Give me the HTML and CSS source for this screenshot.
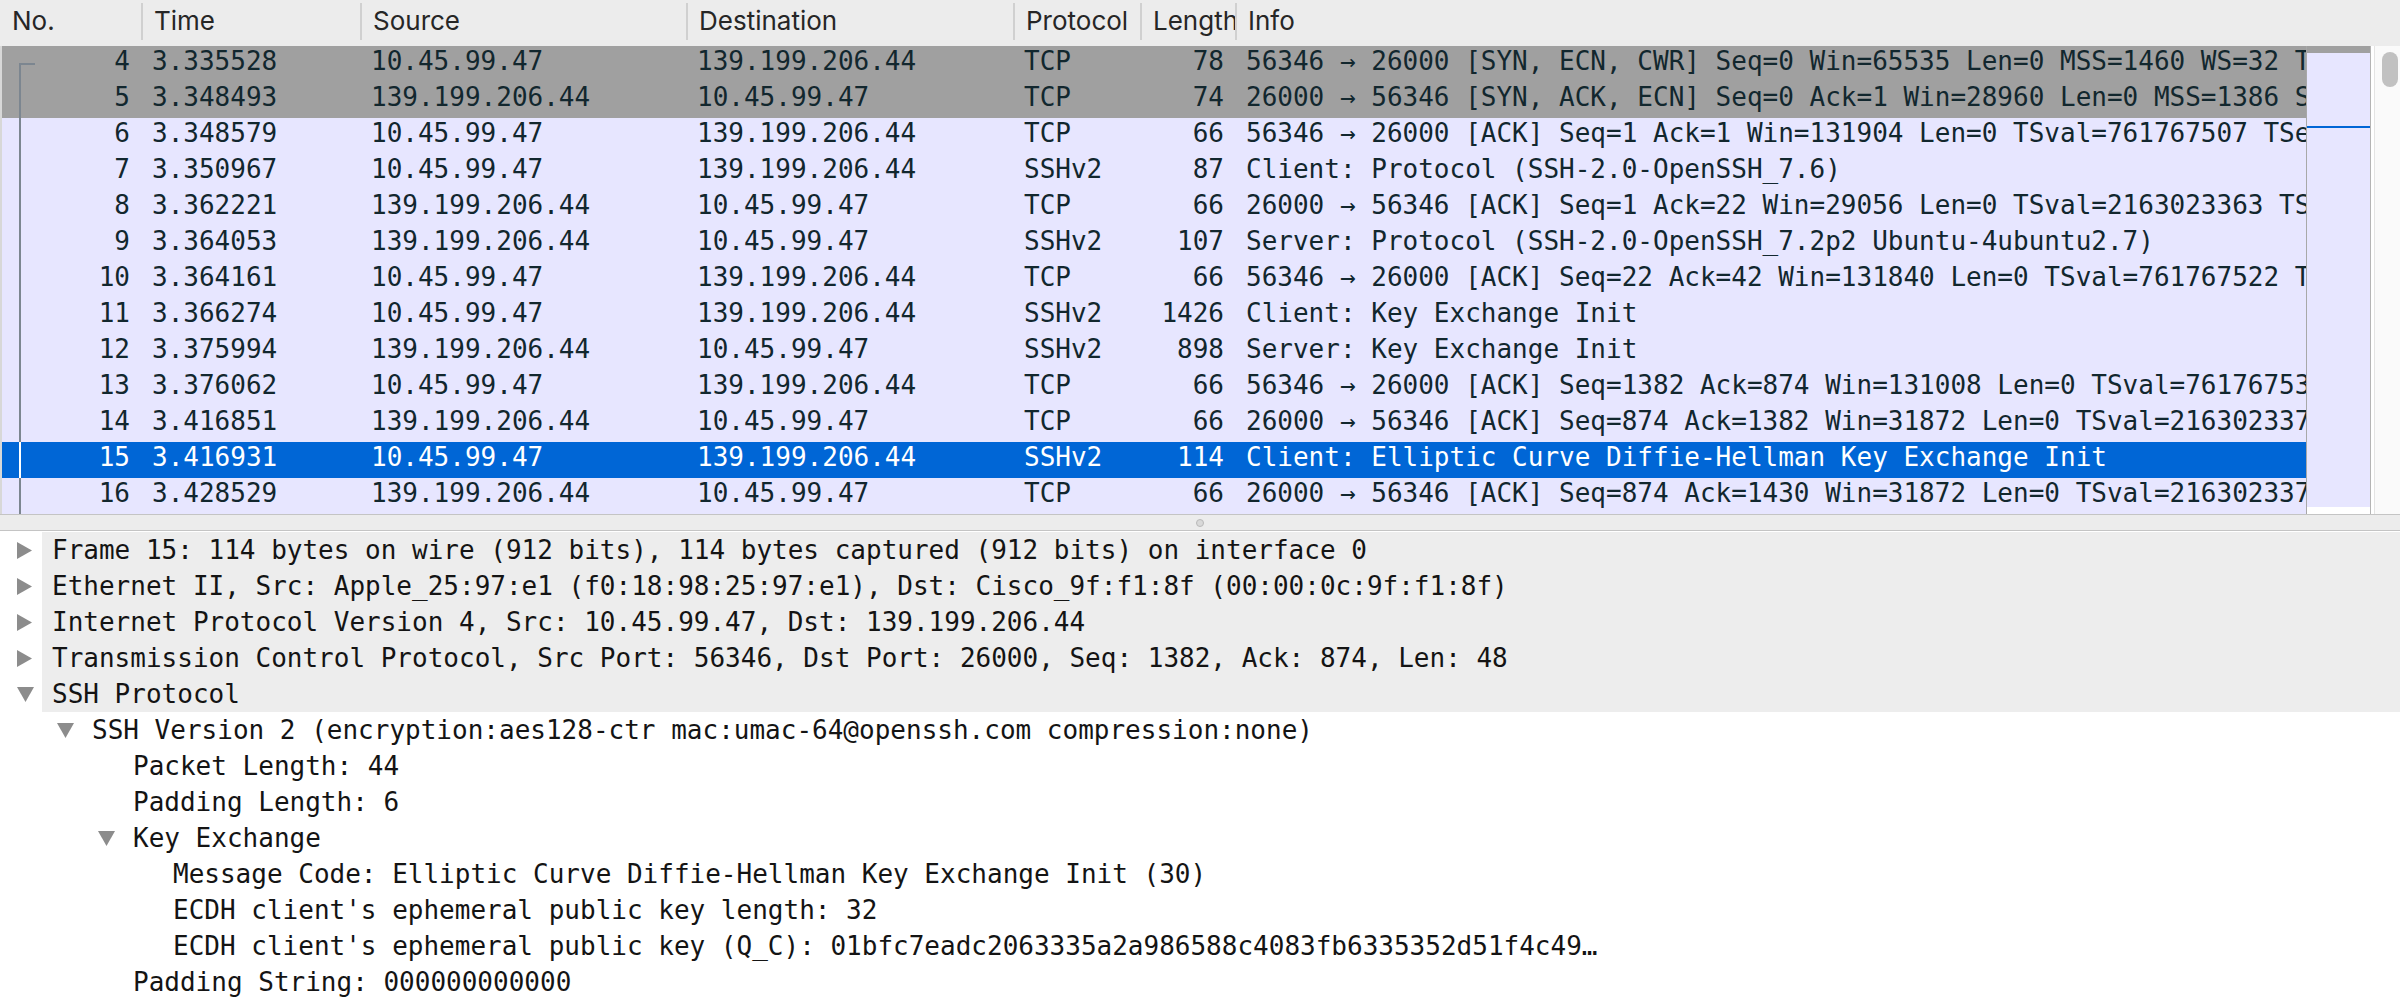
FILE: index.html
```html
<!DOCTYPE html>
<html>
<head>
<meta charset="utf-8">
<link rel="stylesheet" href="styles.css">
</head>
<body>
<div class="app">
  <section class="plist">
    <div class="phead">
      <div class="hc first">No.</div>
      <div class="hc">Time</div>
      <div class="hc">Source</div>
      <div class="hc">Destination</div>
      <div class="hc">Protocol</div>
      <div class="hc">Length</div>
      <div class="hc">Info</div>
    </div>
    <div class="pbody">
      <div class="rows">
        <div class="row syn"><span class="c no"><i class="rel start"></i>4</span><span class="c">3.335528</span><span class="c">10.45.99.47</span><span class="c">139.199.206.44</span><span class="c">TCP</span><span class="c num">78</span><span class="c info">56346 → 26000 [SYN, ECN, CWR] Seq=0 Win=65535 Len=0 MSS=1460 WS=32 TSval=761767491 TSecr=0 SACK_PERM=1</span></div>
        <div class="row syn"><span class="c no"><i class="rel"></i>5</span><span class="c">3.348493</span><span class="c">139.199.206.44</span><span class="c">10.45.99.47</span><span class="c">TCP</span><span class="c num">74</span><span class="c info">26000 → 56346 [SYN, ACK, ECN] Seq=0 Ack=1 Win=28960 Len=0 MSS=1386 SACK_PERM=1 TSval=2163023347</span></div>
        <div class="row"><span class="c no"><i class="rel"></i>6</span><span class="c">3.348579</span><span class="c">10.45.99.47</span><span class="c">139.199.206.44</span><span class="c">TCP</span><span class="c num">66</span><span class="c info">56346 → 26000 [ACK] Seq=1 Ack=1 Win=131904 Len=0 TSval=761767507 TSecr=2163023347</span></div>
        <div class="row"><span class="c no"><i class="rel"></i>7</span><span class="c">3.350967</span><span class="c">10.45.99.47</span><span class="c">139.199.206.44</span><span class="c">SSHv2</span><span class="c num">87</span><span class="c info">Client: Protocol (SSH-2.0-OpenSSH_7.6)</span></div>
        <div class="row"><span class="c no"><i class="rel"></i>8</span><span class="c">3.362221</span><span class="c">139.199.206.44</span><span class="c">10.45.99.47</span><span class="c">TCP</span><span class="c num">66</span><span class="c info">26000 → 56346 [ACK] Seq=1 Ack=22 Win=29056 Len=0 TSval=2163023363 TSecr=761767507</span></div>
        <div class="row"><span class="c no"><i class="rel"></i>9</span><span class="c">3.364053</span><span class="c">139.199.206.44</span><span class="c">10.45.99.47</span><span class="c">SSHv2</span><span class="c num">107</span><span class="c info">Server: Protocol (SSH-2.0-OpenSSH_7.2p2 Ubuntu-4ubuntu2.7)</span></div>
        <div class="row"><span class="c no"><i class="rel"></i>10</span><span class="c">3.364161</span><span class="c">10.45.99.47</span><span class="c">139.199.206.44</span><span class="c">TCP</span><span class="c num">66</span><span class="c info">56346 → 26000 [ACK] Seq=22 Ack=42 Win=131840 Len=0 TSval=761767522 TSecr=2163023364</span></div>
        <div class="row"><span class="c no"><i class="rel"></i>11</span><span class="c">3.366274</span><span class="c">10.45.99.47</span><span class="c">139.199.206.44</span><span class="c">SSHv2</span><span class="c num">1426</span><span class="c info">Client: Key Exchange Init</span></div>
        <div class="row"><span class="c no"><i class="rel"></i>12</span><span class="c">3.375994</span><span class="c">139.199.206.44</span><span class="c">10.45.99.47</span><span class="c">SSHv2</span><span class="c num">898</span><span class="c info">Server: Key Exchange Init</span></div>
        <div class="row"><span class="c no"><i class="rel"></i>13</span><span class="c">3.376062</span><span class="c">10.45.99.47</span><span class="c">139.199.206.44</span><span class="c">TCP</span><span class="c num">66</span><span class="c info">56346 → 26000 [ACK] Seq=1382 Ack=874 Win=131008 Len=0 TSval=761767531 TSecr=2163023373</span></div>
        <div class="row"><span class="c no"><i class="rel"></i>14</span><span class="c">3.416851</span><span class="c">139.199.206.44</span><span class="c">10.45.99.47</span><span class="c">TCP</span><span class="c num">66</span><span class="c info">26000 → 56346 [ACK] Seq=874 Ack=1382 Win=31872 Len=0 TSval=2163023377 TSecr=761767531</span></div>
        <div class="row sel"><span class="c no"><i class="rel"></i>15</span><span class="c">3.416931</span><span class="c">10.45.99.47</span><span class="c">139.199.206.44</span><span class="c">SSHv2</span><span class="c num">114</span><span class="c info">Client: Elliptic Curve Diffie-Hellman Key Exchange Init</span></div>
        <div class="row"><span class="c no"><i class="rel"></i>16</span><span class="c">3.428529</span><span class="c">139.199.206.44</span><span class="c">10.45.99.47</span><span class="c">TCP</span><span class="c num">66</span><span class="c info">26000 → 56346 [ACK] Seq=874 Ack=1430 Win=31872 Len=0 TSval=2163023379 TSecr=761767571</span></div>
      </div>
      <div class="minimap">
        <div class="mm-syn"></div>
        <div class="mm-pre"></div>
        <div class="mm-sel"></div>
        <div class="mm-rest"></div>
        <div class="mm-end"></div>
      </div>
      <div class="vscroll"><div class="thumb"></div></div>
    </div>
  </section>

  <div class="splitter"><span class="grip"></span></div>

  <section class="tree">
    <div class="drow top l0"><span class="tw"><svg class="tri" width="15" height="17" viewBox="0 0 15 17"><polygon points="0,0 15,8.5 0,17"/></svg></span><span class="tx">Frame 15: 114 bytes on wire (912 bits), 114 bytes captured (912 bits) on interface 0</span></div>
    <div class="drow top l0"><span class="tw"><svg class="tri" width="15" height="17" viewBox="0 0 15 17"><polygon points="0,0 15,8.5 0,17"/></svg></span><span class="tx">Ethernet II, Src: Apple_25:97:e1 (f0:18:98:25:97:e1), Dst: Cisco_9f:f1:8f (00:00:0c:9f:f1:8f)</span></div>
    <div class="drow top l0"><span class="tw"><svg class="tri" width="15" height="17" viewBox="0 0 15 17"><polygon points="0,0 15,8.5 0,17"/></svg></span><span class="tx">Internet Protocol Version 4, Src: 10.45.99.47, Dst: 139.199.206.44</span></div>
    <div class="drow top l0"><span class="tw"><svg class="tri" width="15" height="17" viewBox="0 0 15 17"><polygon points="0,0 15,8.5 0,17"/></svg></span><span class="tx">Transmission Control Protocol, Src Port: 56346, Dst Port: 26000, Seq: 1382, Ack: 874, Len: 48</span></div>
    <div class="drow top l0"><span class="tw"><svg class="tri" width="17" height="15" viewBox="0 0 17 15"><polygon points="0,0 17,0 8.5,15"/></svg></span><span class="tx">SSH Protocol</span></div>
    <div class="drow l1"><span class="tw"><svg class="tri" width="17" height="15" viewBox="0 0 17 15"><polygon points="0,0 17,0 8.5,15"/></svg></span><span class="tx">SSH Version 2 (encryption:aes128-ctr mac:umac-64@openssh.com compression:none)</span></div>
    <div class="drow l2"><span class="tw"></span><span class="tx">Packet Length: 44</span></div>
    <div class="drow l2"><span class="tw"></span><span class="tx">Padding Length: 6</span></div>
    <div class="drow l2"><span class="tw"><svg class="tri" width="17" height="15" viewBox="0 0 17 15"><polygon points="0,0 17,0 8.5,15"/></svg></span><span class="tx">Key Exchange</span></div>
    <div class="drow l3"><span class="tw"></span><span class="tx">Message Code: Elliptic Curve Diffie-Hellman Key Exchange Init (30)</span></div>
    <div class="drow l3"><span class="tw"></span><span class="tx">ECDH client's ephemeral public key length: 32</span></div>
    <div class="drow l3"><span class="tw"></span><span class="tx">ECDH client's ephemeral public key (Q_C): 01bfc7eadc2063335a2a986588c4083fb6335352d51f4c49…</span></div>
    <div class="drow l2"><span class="tw"></span><span class="tx">Padding String: 000000000000</span></div>
  </section>
</div>
</body>
</html>
```

FILE: styles.css
```css
html, body {
  margin: 0;
  padding: 0;
  background: #ffffff;
}

body {
  width: 2400px;
  height: 1006px;
  overflow: hidden;
}

.app {
  display: flex;
  flex-direction: column;
  height: 1006px;
}

/* ---------- packet list ---------- */
.plist {
  display: flex;
  flex-direction: column;
  flex: none;
}

.phead {
  display: grid;
  grid-template-columns: 141px 219px 326px 327px 127px 95px 1fr;
  height: 46px;
  background: #ececec;
  font-family: Inter, "Liberation Sans", sans-serif;
  font-size: 26px;
  color: #262626;
}

.hc {
  margin: 3px 0 6px;
  line-height: 36px;
  padding-left: 11px;
  border-left: 2px solid #d0d0d0;
  white-space: nowrap;
  overflow: hidden;
}

.hc.first {
  border-left: none;
  padding-left: 12px;
}

.pbody {
  display: flex;
  height: 468px;
  border-bottom: 1px solid #c4c4c4;
}

.rows {
  width: 2304px;
  flex: none;
  border-left: 2px solid #d8d8d8;
  overflow: hidden;
  font-family: "DejaVu Sans Mono", "Liberation Mono", monospace;
  font-size: 26px;
  color: #12272e;
}

.row {
  display: grid;
  grid-template-columns: 139px 219px 326px 327px 127px 95px 1fr;
  height: 36px;
  line-height: 31px;
  background: #e7e6ff;
  white-space: pre;
}

.row.syn {
  background: #a0a0a0;
}

.row.sel {
  background: #0066d6;
  color: #ffffff;
}

.c {
  padding: 0 11px;
  overflow: hidden;
}

.c.info {
  padding-right: 0;
}

.c.no, .c.num {
  text-align: right;
}

.c.no {
  position: relative;
}

.rel {
  position: absolute;
  left: 17px;
  top: 0;
  bottom: 0;
  border-left: 2px solid #7c8690;
}

.rel.start {
  top: 17px;
  width: 14px;
  border-top: 2px solid #7c8690;
}

.row.sel .rel {
  border-left-color: #ffffff;
}

.minimap {
  width: 63px;
  flex: none;
  display: flex;
  flex-direction: column;
  border-left: 1px solid #a8a8a8;
  border-right: 1px solid #b4b4b4;
}

.mm-syn {
  height: 7px;
  background: #a0a0a0;
}

.mm-pre {
  height: 73px;
  background: #e7e6ff;
}

.mm-sel {
  height: 2px;
  background: #0066d6;
}

.mm-rest {
  flex: 1;
  background: #e7e6ff;
}

.mm-end {
  height: 7px;
  background: #ffffff;
}

.vscroll {
  flex: 1;
  margin-left: 3px;
  background: #fafafa;
  border-left: 1px solid #e4e4e4;
  padding: 6px 0 0 7px;
}

.thumb {
  width: 16px;
  height: 35px;
  border-radius: 8px;
  background: #c1c1c1;
}

/* ---------- splitter ---------- */
.splitter {
  height: 15px;
  background: #ececec;
  border-bottom: 1px solid #c4c4c4;
  display: flex;
  justify-content: center;
  align-items: center;
}

.grip {
  width: 6px;
  height: 6px;
  border-radius: 50%;
  background: #d9d9d9;
  border: 1px solid #b9b9b9;
}

/* ---------- detail tree ---------- */
.tree {
  flex: 1;
  padding-top: 1px;
  font-family: "DejaVu Sans Mono", "Liberation Mono", monospace;
  font-size: 26px;
  color: #141414;
}

.drow {
  display: flex;
  align-items: center;
  height: 36px;
  white-space: pre;
}

.drow.top {
  background: linear-gradient(to right, #ffffff 42px, #ededed 42px);
}

.drow.l0 { padding-left: 17px; }
.drow.l1 { padding-left: 57px; }
.drow.l2 { padding-left: 98px; }
.drow.l3 { padding-left: 138px; }

.tw {
  width: 35px;
  flex: none;
  display: flex;
  align-items: center;
}

.tri {
  fill: #8c8c8c;
  display: block;
}
```
